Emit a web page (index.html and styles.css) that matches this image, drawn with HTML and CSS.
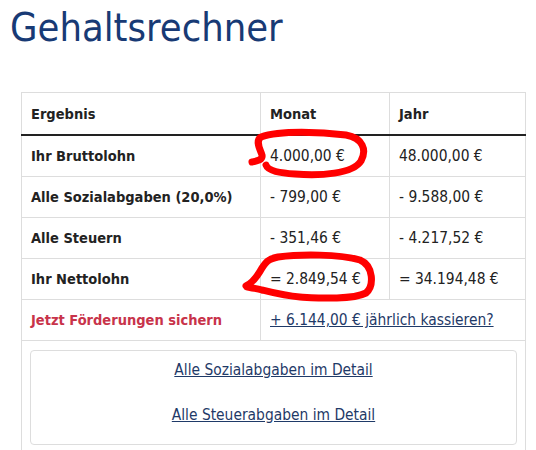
FILE: index.html
```html
<!DOCTYPE html>
<html lang="de">
<head>
    <meta charset="UTF-8">
    <meta name="viewport" content="width=device-width, initial-scale=1.0">
    <title>Gehaltsrechner</title>
    <link rel="stylesheet" href="styles.css">
</head>
<body>
    <h1>Gehaltsrechner</h1>
    <div class="result">
        <table class="salary">
            <thead>
                <tr>
                    <th class="col-label">Ergebnis</th>
                    <th class="col-month">Monat</th>
                    <th class="col-year">Jahr</th>
                </tr>
            </thead>
            <tbody>
                <tr>
                    <th>Ihr Bruttolohn</th>
                    <td>4.000,00 €</td>
                    <td>48.000,00 €</td>
                </tr>
                <tr>
                    <th>Alle Sozialabgaben (20,0%)</th>
                    <td>- 799,00 €</td>
                    <td>- 9.588,00 €</td>
                </tr>
                <tr>
                    <th>Alle Steuern</th>
                    <td>- 351,46 €</td>
                    <td>- 4.217,52 €</td>
                </tr>
                <tr>
                    <th>Ihr Nettolohn</th>
                    <td>= 2.849,54 €</td>
                    <td>= 34.194,48 €</td>
                </tr>
                <tr>
                    <th class="promo">Jetzt Förderungen sichern</th>
                    <td colspan="2"><a href="#">+ 6.144,00 € jährlich kassieren?</a></td>
                </tr>
                <tr>
                    <td colspan="3" class="details-cell">
                        <div class="details">
                            <a href="#">Alle Sozialabgaben im Detail</a>
                            <a href="#">Alle Steuerabgaben im Detail</a>
                        </div>
                    </td>
                </tr>
            </tbody>
        </table>

        <!-- hand-drawn marks on the screenshot -->
        <svg class="marks" width="536" height="450" viewBox="0 0 536 450">
            <path d="M252 162 C257 161 263 160 262 155 C260 149 255 141 261 137 C280 130 322 132 346 135 C363 138 367 150 361 161 C353 174 320 176 295 174 C280 173 268 171 266 165" />
            <path d="M246 286 C252 283 257 277 262 268 C266 262 268 259 278 257 C300 254 340 254 360 260 C374 266 374 286 366 293 C352 300 320 298 300 297 C285 296 270 292 262 290 C256 288 250 288 247 287" />
        </svg>
    </div>
</body>
</html>
```

FILE: styles.css
```css
body {
    font-family: 'DejaVu Sans Condensed', 'DejaVu Sans', Verdana, sans-serif;
    background-color: #fff;
    margin: 0;
    padding: 0;
    color: #222;
}
h1 {
    font-weight: normal;
    font-size: 39.5px;
    color: #183a75;
    margin: 0;
    padding: 4px 0 0 10px;
    line-height: 46px;
}
.result {
    padding: 42px 11px 0 21px;
}
.salary {
    width: 505px;
    border-collapse: collapse;
    font-size: 15.4px;
}
.salary th,
.salary td {
    border: 1px solid #ddd;
    height: 40px;
    padding: 0 9px;
    text-align: left;
    vertical-align: middle;
}
.salary th {
    font-weight: bold;
    font-size: 14.5px;
}
.salary thead th {
    height: 41px;
    border-bottom: 2px solid #222;
}
.col-label {
    width: 220px;
}
.col-month {
    width: 110px;
}
.promo {
    color: #c8334a;
}
.salary a {
    color: #1f3a68;
}
.salary .details-cell {
    padding: 9px 8px 20px;
}
.details {
    border: 1px solid #ddd;
    border-radius: 4px;
    display: flex;
    flex-direction: column;
    align-items: center;
    gap: 27px;
    padding: 10px 0 20px;
}
.marks {
    position: absolute;
    left: 0;
    top: 0;
    pointer-events: none;
}
.marks path {
    fill: none;
    stroke: #f00;
    stroke-width: 7;
    stroke-linecap: round;
    stroke-linejoin: round;
}
```
